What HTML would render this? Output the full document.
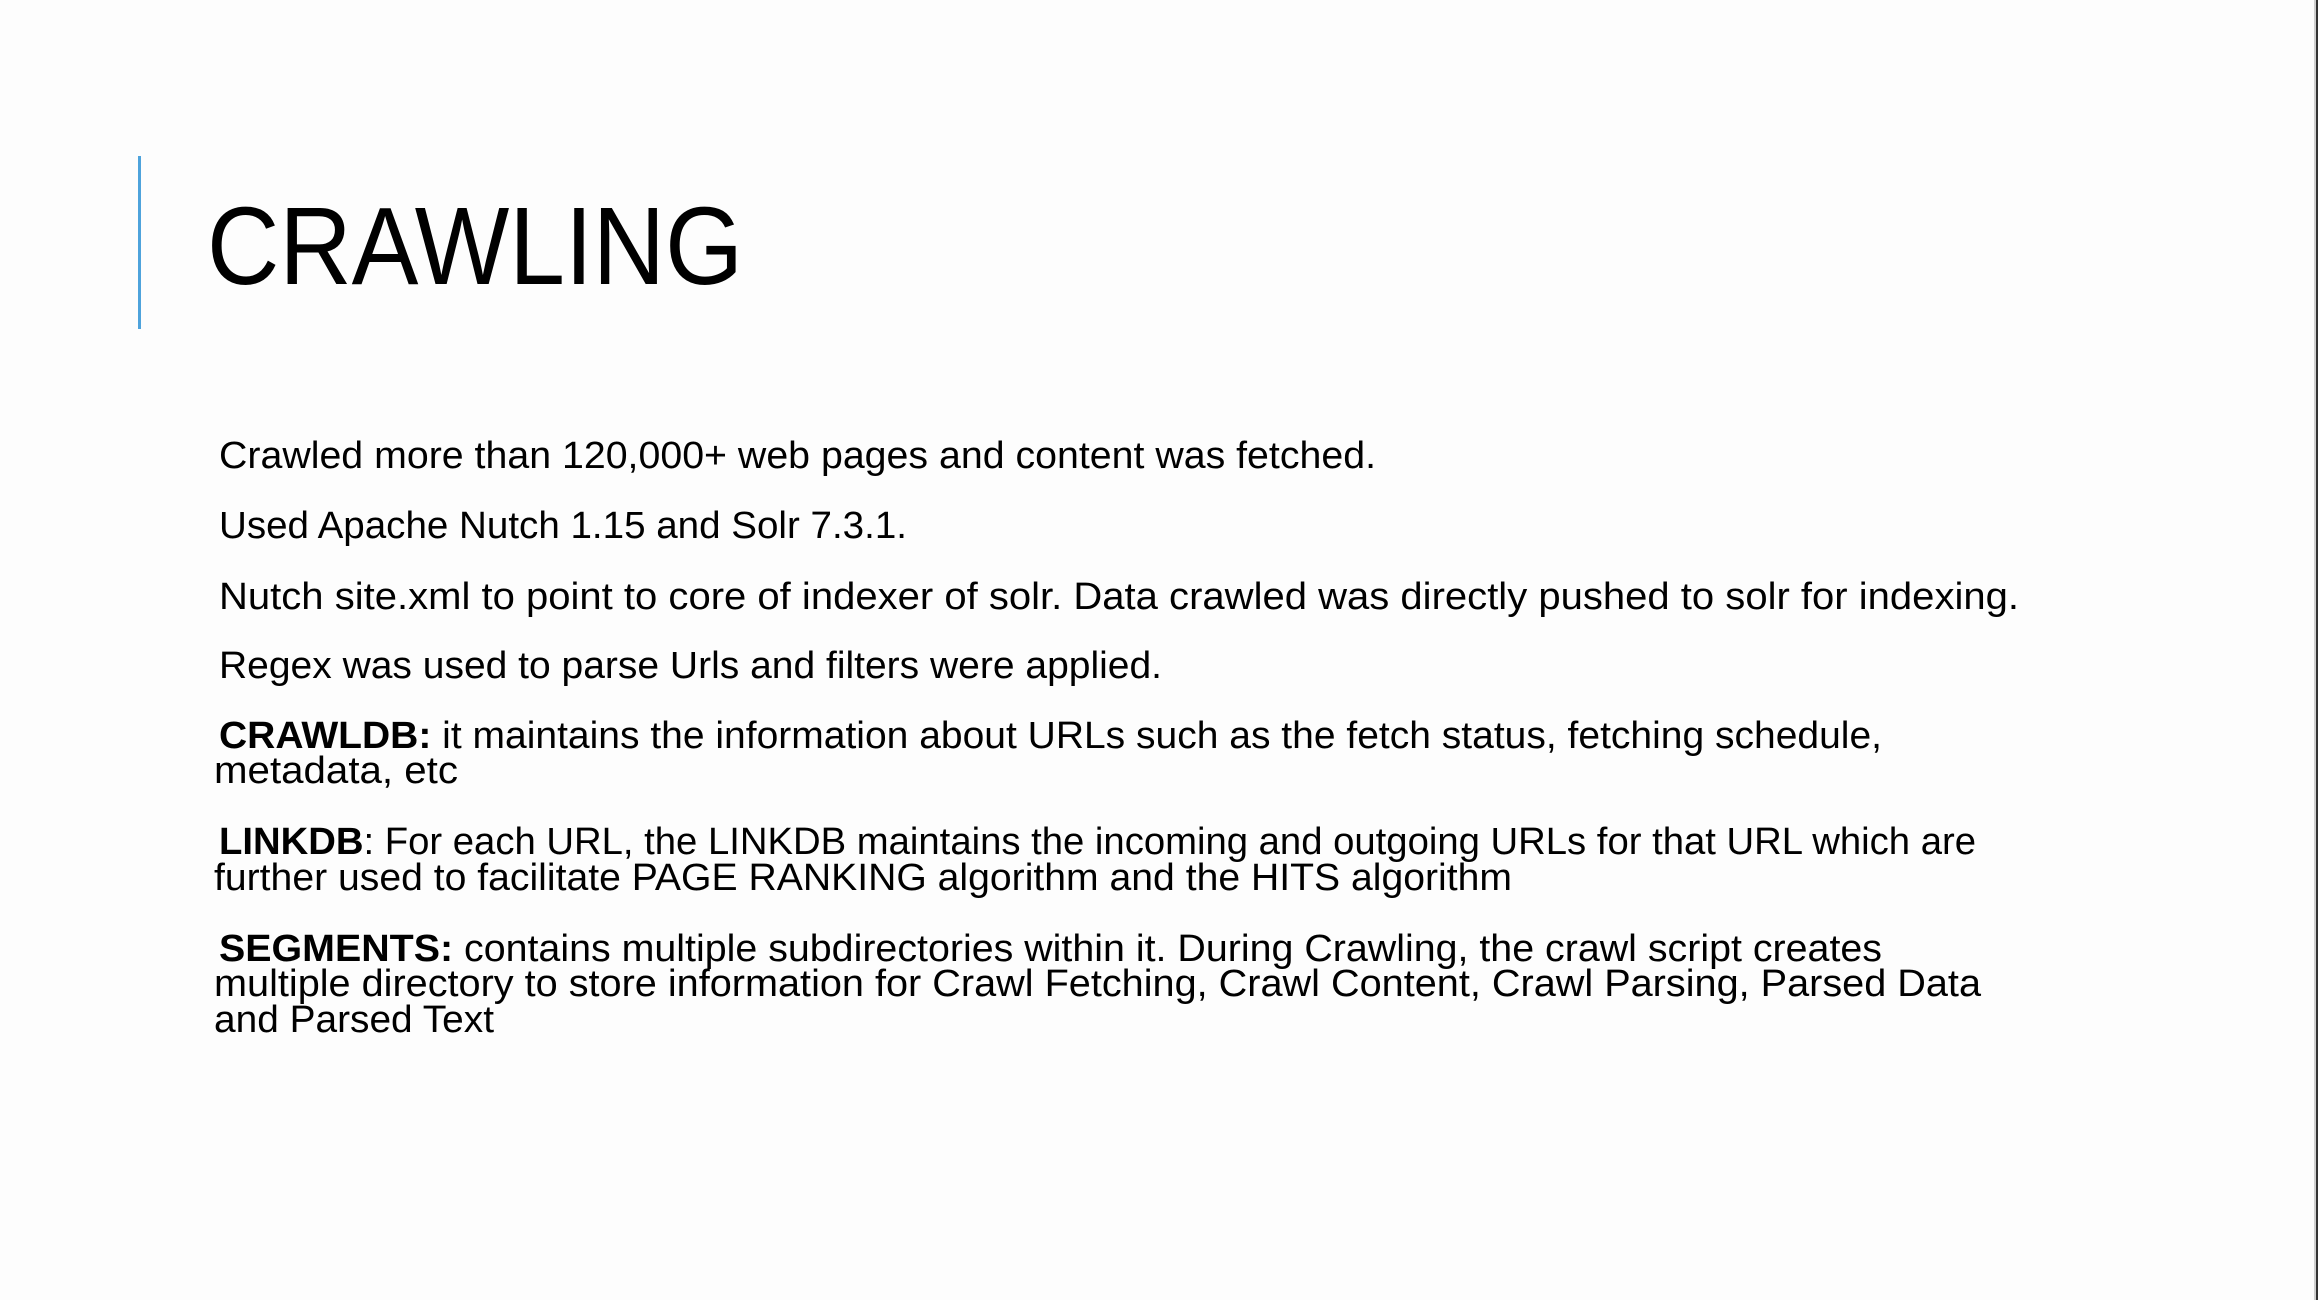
<!DOCTYPE html>
<html><head><meta charset="utf-8"><style>
html,body{margin:0;padding:0;background:#fff;}
svg{display:block;}
text{font-family:"Liberation Sans",Arial,sans-serif;fill:#000;}
</style></head><body>
<svg width="2318" height="1300" viewBox="0 0 2318 1300" xmlns="http://www.w3.org/2000/svg">
<rect x="0" y="0" width="2318" height="1300" fill="#fdfdfd"/>
<rect x="2314" y="0" width="2" height="1300" fill="#cfcfcf"/>
<rect x="2316" y="0" width="2" height="1300" fill="#333"/>
<rect x="138" y="156" width="3" height="173" fill="#4ea3dc"/>
<text x="207" y="284" font-size="110" textLength="536" lengthAdjust="spacingAndGlyphs" fill="#111">CRAWLING</text>
<g font-size="38">
<text x="219" y="468" textLength="1157" lengthAdjust="spacingAndGlyphs">Crawled more than 120,000+ web pages and content was fetched.</text>
<text x="219" y="538" textLength="688" lengthAdjust="spacingAndGlyphs">Used Apache Nutch 1.15 and Solr 7.3.1.</text>
<text x="219" y="609" textLength="1800" lengthAdjust="spacingAndGlyphs">Nutch site.xml to point to core of indexer of solr. Data crawled was directly pushed to solr for indexing.</text>
<text x="219" y="678" textLength="943" lengthAdjust="spacingAndGlyphs">Regex was used to parse Urls and filters were applied.</text>
<text x="219" y="748" textLength="1663" lengthAdjust="spacingAndGlyphs"><tspan font-weight="bold">CRAWLDB:</tspan> it maintains the information about URLs such as the fetch status, fetching schedule,</text>
<text x="214" y="783" textLength="244" lengthAdjust="spacingAndGlyphs">metadata, etc</text>
<text x="219" y="854" textLength="1757" lengthAdjust="spacingAndGlyphs"><tspan font-weight="bold">LINKDB</tspan>: For each URL, the LINKDB maintains the incoming and outgoing URLs for that URL which are</text>
<text x="214" y="890" textLength="1298" lengthAdjust="spacingAndGlyphs">further used to facilitate PAGE RANKING algorithm and the HITS algorithm</text>
<text x="219" y="961" textLength="1663" lengthAdjust="spacingAndGlyphs"><tspan font-weight="bold">SEGMENTS:</tspan> contains multiple subdirectories within it. During Crawling, the crawl script creates</text>
<text x="214" y="996" textLength="1767" lengthAdjust="spacingAndGlyphs">multiple directory to store information for Crawl Fetching, Crawl Content, Crawl Parsing, Parsed Data</text>
<text x="214" y="1032" textLength="280" lengthAdjust="spacingAndGlyphs">and Parsed Text</text>
</g>
</svg>
</body></html>
